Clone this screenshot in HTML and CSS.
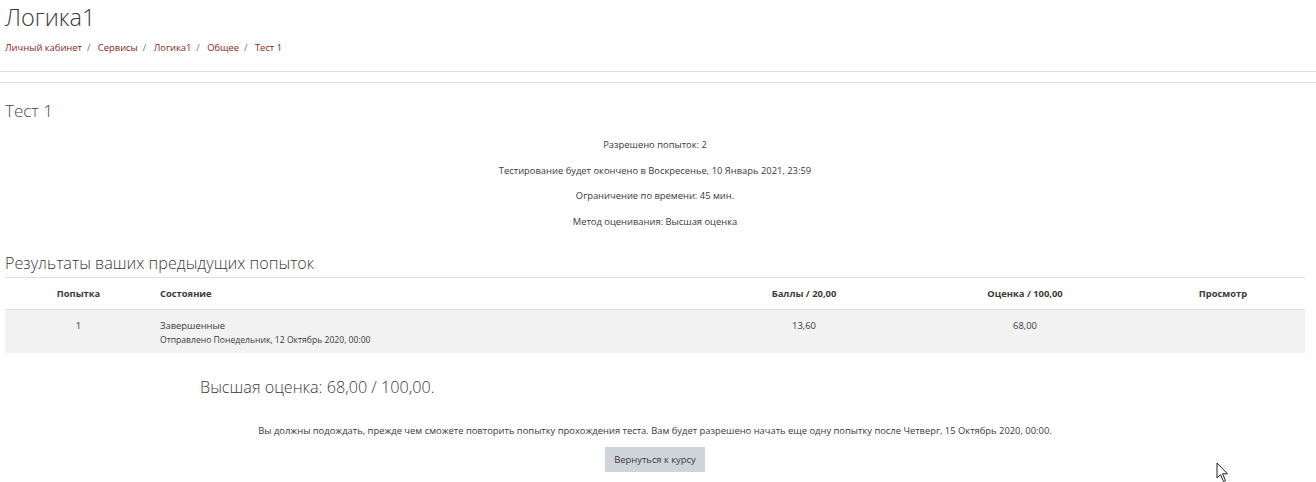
FILE: index.html
```html
<!DOCTYPE html>
<html lang="ru">

<head>
    <meta charset="UTF-8">
    <title>Тест 1</title>
    <link rel="stylesheet" href="styles.css">
</head>

<body>
    <div class="page-header">
        <h1>Логика1</h1>
        <nav class="breadcrumb">
            <a href="#">Личный кабинет</a><span class="sep">/</span>
            <a href="#">Сервисы</a><span class="sep">/</span>
            <a href="#">Логика1</a><span class="sep">/</span>
            <a href="#">Общее</a><span class="sep">/</span>
            <a href="#">Тест 1</a>
        </nav>
    </div>
    <div class="rule"></div>
    <div class="rule second"></div>

    <div class="content">
        <h2>Тест 1</h2>
        <div class="quizinfo">
            <p>Разрешено попыток: 2</p>
            <p>Тестирование будет окончено в Воскресенье, 10 Январь 2021, 23:59</p>
            <p>Ограничение по времени: 45 мин.</p>
            <p>Метод оценивания: Высшая оценка</p>
        </div>

        <h3>Результаты ваших предыдущих попыток</h3>
        <table class="attempts">
            <colgroup>
                <col style="width: 147px">
                <col style="width: 547px">
                <col style="width: 210px">
                <col style="width: 232px">
                <col>
            </colgroup>
            <thead>
                <tr>
                    <th>Попытка</th>
                    <th class="state">Состояние</th>
                    <th>Баллы / 20,00</th>
                    <th>Оценка / 100,00</th>
                    <th>Просмотр</th>
                </tr>
            </thead>
            <tbody>
                <tr>
                    <td>1</td>
                    <td class="state">Завершенные<br><span class="submitted">Отправлено Понедельник, 12 Октябрь 2020, 00:00</span></td>
                    <td>13,60</td>
                    <td>68,00</td>
                    <td></td>
                </tr>
            </tbody>
        </table>

        <h3 class="best">Высшая оценка: 68,00 / 100,00.</h3>

        <div class="wait">
            <p>Вы должны подождать, прежде чем сможете повторить попытку прохождения теста. Вам будет разрешено начать еще одну попытку после Четверг, 15 Октябрь 2020, 00:00.</p>
            <button class="back">Вернуться к курсу</button>
        </div>
    </div>

    <!-- mouse pointer left in the screenshot -->
    <svg class="cursor" width="14" height="22" viewBox="0 0 14 22">
        <path d="M1 1 L1 16 L4.5 12.5 L7.5 19.5 L9.5 18.6 L6.6 11.8 L11.5 11.8 Z" fill="#fff" stroke="#222" stroke-width="1"/>
    </svg>
</body>

</html>
```

FILE: styles.css
```css
body {
    margin: 0;
    font-family: "Open Sans", "Noto Sans", sans-serif;
    font-size: 9.4px;
    color: #373a3c;
    background: #fff;
    position: relative;
    height: 482px;
    overflow: hidden;
}

.page-header {
    padding: 0 5px;
    height: 71px;
}

h1 {
    margin: 0;
    padding-top: 1px;
    font-size: 23.5px;
    font-weight: 300;
    line-height: 32px;
}

.breadcrumb {
    margin-top: 8px;
    line-height: 14px;
}

.breadcrumb a {
    color: #8a1c1c;
    text-decoration: none;
}

.breadcrumb .sep {
    color: #6c757d;
    padding: 0 5px;
}

.rule {
    border-top: 1px solid #dedede;
    height: 10px;
}

.rule.second {
    height: 0;
}

.content {
    padding: 0 11px 0 5px;
}

h2 {
    margin: 15px 0 0;
    font-size: 17px;
    font-weight: 300;
    line-height: 26px;
    color: #4a4a4a;
}

.quizinfo {
    text-align: center;
    margin-top: 8px;
}

.quizinfo p {
    margin: 0;
    line-height: 25.7px;
}

h3 {
    margin: 16px 0 0;
    font-size: 16.2px;
    font-weight: 300;
    line-height: 24px;
    padding-bottom: 2px;
    border-bottom: 1px solid #dedede;
}

.attempts {
    width: 100%;
    border-collapse: collapse;
    table-layout: fixed;
}

.attempts th {
    font-weight: bold;
    height: 31px;
    padding: 0;
    text-align: center;
    border-bottom: 1px solid #dedede;
}

.attempts td {
    background: #f2f2f2;
    height: 44px;
    vertical-align: top;
    padding: 9px 0 0;
    box-sizing: border-box;
    text-align: center;
    line-height: 14px;
}

.attempts .state {
    text-align: left;
    padding-left: 8px;
}

.submitted {
    font-size: 8.6px;
}

h3.best {
    border: 0;
    margin: 22px 0 0 195px;
}

.wait {
    text-align: center;
    margin-top: 23px;
}

.wait p {
    margin: 0;
    line-height: 14px;
}

.back {
    margin-top: 9px;
    font-family: inherit;
    font-size: 9.4px;
    color: #373a3c;
    background: #ced4da;
    border: 0;
    padding: 0 9px;
    height: 25px;
}

.cursor {
    position: absolute;
    left: 1216px;
    top: 462px;
}
```
